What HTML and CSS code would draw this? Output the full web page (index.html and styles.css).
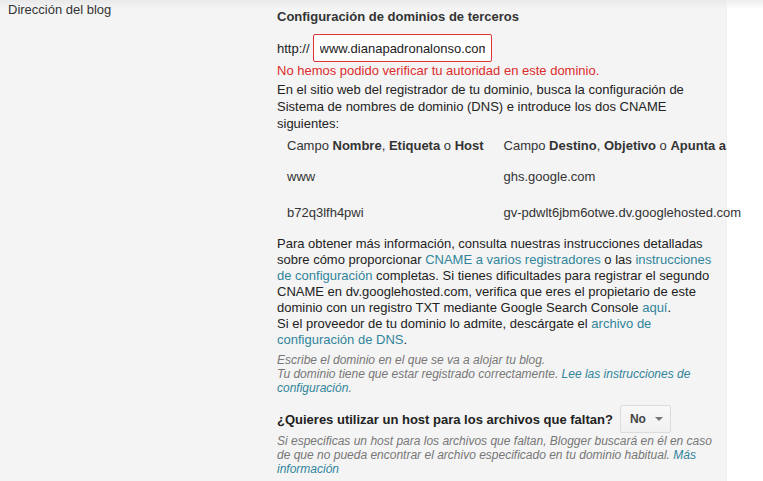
FILE: index.html
```html
<!DOCTYPE html>
<html lang="es">
<head>
    <meta charset="UTF-8">
    <title>Dirección del blog</title>
    <link rel="stylesheet" href="styles.css">
</head>
<body>
    <div class="settings-page">
        <div class="label-col">Dirección del blog</div>

        <div class="content-col">
            <h3 class="section-title">Configuración de dominios de terceros</h3>

            <div class="url-row">
                <span class="url-prefix">http://</span>
                <input class="url-input" type="text" value="www.dianapadronalonso.com">
            </div>
            <div class="error-text">No hemos podido verificar tu autoridad en este dominio.</div>

            <p class="body-text">En el sitio web del registrador de tu dominio, busca la configuración de Sistema de nombres de dominio (DNS) e introduce los dos CNAME siguientes:</p>

            <!-- CNAME records -->
            <table class="cname-table">
                <tr class="cname-head">
                    <td>Campo <b>Nombre</b>, <b>Etiqueta</b> o <b>Host</b></td>
                    <td>Campo <b>Destino</b>, <b>Objetivo</b> o <b>Apunta a</b></td>
                </tr>
                <tr>
                    <td>www</td>
                    <td>ghs.google.com</td>
                </tr>
                <tr>
                    <td>b72q3lfh4pwi</td>
                    <td>gv-pdwlt6jbm6otwe.dv.googlehosted.com</td>
                </tr>
            </table>

            <p class="body-text more-info">Para obtener más información, consulta nuestras instrucciones detalladas sobre cómo proporcionar <a href="#">CNAME a varios registradores</a> o las <a href="#">instrucciones de configuración</a> completas. Si tienes dificultades para registrar el segundo CNAME en dv.googlehosted.com, verifica que eres el propietario de este dominio con un registro TXT mediante Google Search Console <a href="#">aquí</a>.<br>Si el proveedor de tu dominio lo admite, descárgate el <a href="#">archivo de configuración de DNS</a>.</p>

            <div class="hint">Escribe el dominio en el que se va a alojar tu blog.<br>Tu dominio tiene que estar registrado correctamente. <a href="#">Lee las instrucciones de configuración</a>.</div>

            <div class="host-row">
                <span class="host-question">¿Quieres utilizar un host para los archivos que faltan?</span>
                <button class="select-btn">No <span class="caret"></span></button>
            </div>
            <div class="hint host-hint">Si especificas un host para los archivos que faltan, Blogger buscará en él en caso de que no pueda encontrar el archivo especificado en tu dominio habitual. <a href="#">Más información</a></div>
        </div>
    </div>
</body>
</html>
```

FILE: styles.css
```css
* {
    margin: 0;
    padding: 0;
    box-sizing: border-box;
}

body {
    font-family: 'Liberation Sans', Arial, sans-serif;
    font-size: 13px;
    color: #222;
    background: linear-gradient(#ededed, #fff 9px) no-repeat, #fff;
    height: 100vh;
    overflow: hidden;
}

a {
    color: #31849b;
    text-decoration: none;
}

.settings-page {
    width: 727px;
    height: 100%;
    display: flex;
    background: linear-gradient(#e9e9e9, #f4f4f4 9px) no-repeat, #f4f4f4;
    border-right: 1px solid #efefef;
}

.label-col {
    width: 277px;
    padding: 2px 0 0 8px;
    color: #333;
}

.content-col {
    width: 440px;
    padding-top: 9px;
}

.section-title {
    font-size: 13px;
    font-weight: bold;
    color: #333;
    margin-bottom: 10px;
}

.url-row {
    display: flex;
    align-items: center;
    gap: 3px;
}

.url-prefix {
    color: #222;
}

.url-input {
    width: 179px;
    height: 28px;
    border: 1px solid #d33;
    border-radius: 2px;
    padding: 0 6px;
    font-family: inherit;
    font-size: 13px;
    color: #222;
    background: #fff;
    outline: none;
}

.error-text {
    color: #dd2c2c;
    margin-top: 1px;
    line-height: 16px;
}

.body-text {
    line-height: 17px;
    margin-top: 2px;
}

.cname-table {
    border-collapse: collapse;
    white-space: nowrap;
}

.cname-table td {
    padding: 0 10px;
    height: 36px;
    color: #333;
}

.cname-table td:first-child {
    width: 217px;
}

.cname-head td {
    height: 26px;
}

.more-info {
    line-height: 16px;
    margin-top: 6px;
}

.hint {
    font-size: 12px;
    font-style: italic;
    color: #777;
    line-height: 14px;
    margin-top: 5px;
}

.host-row {
    display: flex;
    align-items: center;
    gap: 7px;
    margin-top: 10px;
}

.host-question {
    font-size: 13px;
    font-weight: bold;
    color: #222;
}

.select-btn {
    width: 51px;
    height: 28px;
    border: 1px solid #dcdcdc;
    border-radius: 2px;
    background: linear-gradient(#f8f8f8, #f1f1f1);
    font-family: inherit;
    font-size: 12px;
    font-weight: bold;
    color: #444;
    display: flex;
    align-items: center;
    padding-left: 9px;
    gap: 9px;
}

.caret {
    border-left: 4px solid transparent;
    border-right: 4px solid transparent;
    border-top: 4px solid #777;
}

.host-hint {
    margin-top: 1px;
}
```
